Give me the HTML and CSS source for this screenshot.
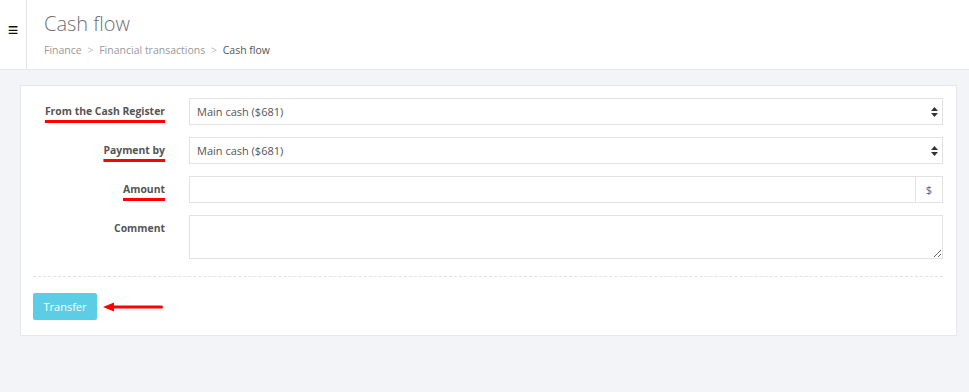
FILE: index.html
```html
<!DOCTYPE html>
<html lang="en">

<head>
    <meta charset="UTF-8">
    <meta name="viewport" content="width=device-width, initial-scale=1.0">
    <title>Cash flow</title>
    <link rel="stylesheet" href="styles.css">
</head>

<body>
    <header class="topbar">
        <div class="menu-toggle">&#8801;</div>
        <div class="page-title">
            <h1>Cash flow</h1>
            <div class="breadcrumb">
                <span>Finance</span>
                <span class="sep">&gt;</span>
                <span>Financial transactions</span>
                <span class="sep">&gt;</span>
                <span class="current">Cash flow</span>
            </div>
        </div>
    </header>

    <div class="card">
        <form id="transferForm">
            <div class="form-row">
                <label class="marked" for="fromCash">From the Cash Register</label>
                <div class="select-wrap">
                    <select id="fromCash">
                        <option>Main cash ($681)</option>
                    </select>
                    <svg class="select-arrow" width="7" height="10" viewBox="0 0 7 10">
                        <path d="M3.5 0L7 4H0z M3.5 10L0 6h7z" fill="#333" />
                    </svg>
                </div>
            </div>

            <div class="form-row">
                <label class="marked" for="payBy">Payment by</label>
                <div class="select-wrap">
                    <select id="payBy">
                        <option>Main cash ($681)</option>
                    </select>
                    <svg class="select-arrow" width="7" height="10" viewBox="0 0 7 10">
                        <path d="M3.5 0L7 4H0z M3.5 10L0 6h7z" fill="#333" />
                    </svg>
                </div>
            </div>

            <div class="form-row">
                <label class="marked" for="amount">Amount</label>
                <div class="input-group">
                    <input type="text" id="amount">
                    <span class="addon">$</span>
                </div>
            </div>

            <div class="form-row">
                <label for="comment">Comment</label>
                <textarea id="comment"></textarea>
            </div>

            <div class="form-actions">
                <button type="submit" class="btn-transfer">Transfer</button>
                <svg class="hint-arrow" width="60" height="10" viewBox="0 0 60 10">
                    <path d="M0 5L11 0.5V3.5H58.5a1.5 1.5 0 0 1 0 3H11V9.5z" fill="#f00" />
                </svg>
            </div>
        </form>
    </div>

    <script>
        document.getElementById('transferForm').addEventListener('submit', function (e) {
            e.preventDefault();
        });
    </script>
</body>

</html>
```

FILE: styles.css
```css
body {
    font-family: "Open Sans", Arial, sans-serif;
    background-color: #f3f4f8;
    margin: 0;
    padding: 0;
    color: #555;
}

.topbar {
    display: flex;
    height: 69px;
    background-color: #fff;
    border-bottom: 1px solid #e6e7ec;
}

.menu-toggle {
    width: 27px;
    border-right: 1px solid #e6e7ec;
    font-size: 18px;
    color: #111;
    display: flex;
    justify-content: center;
    padding-top: 20px;
    box-sizing: border-box;
    line-height: 1;
}

.page-title {
    padding-left: 17px;
}

.page-title h1 {
    font-size: 20px;
    font-weight: 300;
    color: #6f6f6f;
    margin: 10px 0 0 0;
    line-height: 28px;
}

.breadcrumb {
    font-size: 10.5px;
    color: #999;
    margin-top: 5px;
}

.breadcrumb .sep {
    color: #bbb;
    margin: 0 3px;
}

.breadcrumb .current {
    color: #555;
}

.card {
    margin: 15px 12px 0 20px;
    background-color: #fff;
    border: 1px solid #e6e7ec;
    padding: 12px 13px 15px 12px;
}

.form-row {
    display: flex;
    align-items: flex-start;
    margin-bottom: 12px;
}

.form-row label {
    width: 132px;
    padding-right: 24px;
    text-align: right;
    font-size: 10.4px;
    font-weight: 700;
    color: #555;
    line-height: 27px;
    flex-shrink: 0;
}

.form-row label.marked {
    text-decoration: underline;
    text-decoration-color: #f00;
    text-decoration-thickness: 3px;
    text-underline-offset: 5px;
}

.select-wrap {
    flex: 1;
    position: relative;
}

select,
input[type="text"],
textarea {
    width: 100%;
    height: 27px;
    box-sizing: border-box;
    border: 1px solid #e2e2e2;
    border-radius: 0;
    padding: 0 7px;
    font-family: "Open Sans", Arial, sans-serif;
    font-size: 11px;
    color: #555;
    background-color: #fff;
    outline: none;
}

select {
    appearance: none;
    -webkit-appearance: none;
}

.select-arrow {
    position: absolute;
    right: 5px;
    top: 9px;
}

.input-group {
    flex: 1;
    display: flex;
}

.input-group input[type="text"] {
    flex: 1;
}

.addon {
    width: 27px;
    height: 27px;
    box-sizing: border-box;
    border: 1px solid #e2e2e2;
    border-left: none;
    font-size: 11px;
    color: #3f6496;
    display: flex;
    align-items: center;
    justify-content: center;
}

textarea {
    height: 44px;
    flex: 1;
    padding: 5px 7px;
}

.form-actions {
    border-top: 1px dashed #e2e2e2;
    margin-top: 17px;
    padding-top: 16px;
    display: flex;
    align-items: center;
}

.btn-transfer {
    background-color: #5bcde5;
    color: #fff;
    font-family: "Open Sans", Arial, sans-serif;
    font-size: 11px;
    width: 64px;
    height: 27px;
    border: none;
    border-radius: 2px;
    cursor: pointer;
}

.hint-arrow {
    margin-left: 6px;
}
```
